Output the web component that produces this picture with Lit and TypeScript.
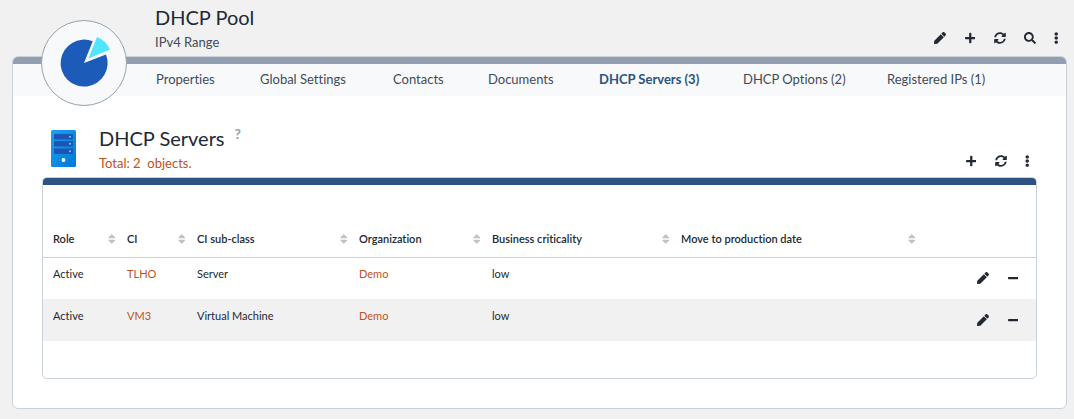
import { LitElement, html, css, svg } from "lit";
import { customElement, property } from "lit/decorators.js";

const ICONS: Record<string, [number, string]> = {
  pen: [512, "M290.74 93.24l128.02 128.02-277.99 277.99-114.14 12.6C11.35 513.54-1.56 500.62.14 485.34l12.7-114.22 277.9-277.88zm207.2-19.06l-60.11-60.11c-18.75-18.75-49.16-18.75-67.91 0l-56.55 56.55 128.02 128.02 56.55-56.55c18.75-18.76 18.75-49.16 0-67.91z"],
  plus: [448, "M416 208H272V64c0-17.67-14.33-32-32-32h-32c-17.67 0-32 14.33-32 32v144H32c-17.67 0-32 14.33-32 32v32c0 17.67 14.33 32 32 32h144v144c0 17.67 14.33 32 32 32h32c17.67 0 32-14.33 32-32V304h144c17.67 0 32-14.33 32-32v-32c0-17.67-14.33-32-32-32z"],
  minus: [448, "M416 208H32c-17.67 0-32 14.33-32 32v32c0 17.67 14.33 32 32 32h384c17.67 0 32-14.33 32-32v-32c0-17.67-14.33-32-32-32z"],
  sync: [512, "M370.72 133.28C339.458 104.008 298.888 87.962 255.848 88c-77.458.068-144.328 53.178-162.791 126.85-1.344 5.363-6.122 9.15-11.651 9.15H24.103c-7.498 0-13.194-6.807-11.807-14.176C33.933 94.924 134.813 8 256 8c66.448 0 126.791 26.136 171.315 68.685L463.03 40.97C478.149 25.851 504 36.559 504 57.941V192c0 13.255-10.745 24-24 24H345.941c-21.382 0-32.09-25.851-16.971-40.971l41.75-41.749zM32 296h134.059c21.382 0 32.09 25.851 16.971 40.971l-41.75 41.75c31.262 29.273 71.835 45.319 114.876 45.28 77.418-.07 144.315-53.144 162.787-126.849 1.344-5.363 6.122-9.15 11.651-9.15h57.304c7.498 0 13.194 6.807 11.807 14.176C478.067 417.076 377.187 504 256 504c-66.448 0-126.791-26.136-171.315-68.685L48.97 471.03C33.851 486.149 8 475.441 8 454.059V320c0-13.255 10.745-24 24-24z"],
  search: [512, "M505 442.7L405.3 343c-4.5-4.5-10.6-7-17-7H372c27.6-35.3 44-79.7 44-128C416 93.1 322.9 0 208 0S0 93.1 0 208s93.1 208 208 208c48.3 0 92.7-16.4 128-44v16.3c0 6.4 2.5 12.5 7 17l99.7 99.7c9.4 9.4 24.6 9.4 33.9 0l28.3-28.3c9.4-9.4 9.4-24.6.1-34zM208 336c-70.7 0-128-57.2-128-128 0-70.7 57.2-128 128-128 70.7 0 128 57.2 128 128 0 70.7-57.2 128-128 128z"],
  more: [192, "M96 184c39.8 0 72 32.2 72 72s-32.2 72-72 72-72-32.2-72-72 32.2-72 72-72zM24 80c0 39.8 32.2 72 72 72s72-32.2 72-72S135.8 8 96 8 24 40.2 24 80zm0 352c0 39.8 32.2 72 72 72s72-32.2 72-72-32.2-72-72-72-72 32.2-72 72z"],
  sort: [320, "M41 288h238c21.4 0 32.1 25.9 17 41L177 448c-9.4 9.4-24.6 9.4-33.9 0L24 329c-15.1-15.1-4.4-41 17-41zm255-105L177 64c-9.4-9.4-24.6-9.4-33.9 0L24 183c-15.1 15.1-4.4 41 17 41h238c21.4 0 32.1-25.9 17-41z"],
};

@customElement("icon-button")
class IconButton extends LitElement {
  @property() icon = "plus";
  @property() label = "";

  static styles = css`
    :host { display: block; }
    .button {
      display: flex;
      align-items: center;
      justify-content: center;
      min-width: 5px;
      height: 16px;
      padding: 0;
      border: 0;
      background: none;
      color: inherit;
      cursor: pointer;
    }
    .wide { width: 12px; }
    .glyph { display: block; height: 12px; fill: currentColor; flex: none; }
  `;

  render() {
    const [w, d] = ICONS[this.icon];
    const kind = this.icon === "sort" || this.icon === "more" ? "" : "wide";
    return html`<button class="button ${kind}" aria-label=${this.label}>
      <svg class="glyph" viewBox="0 0 ${w} 512" aria-hidden="true">${svg`<path d=${d}></path>`}</svg>
    </button>`;
  }
}

interface Row { role: string; ci: string; kind: string; org: string; criticality: string; date: string }

const TABS = [
  "Properties", "Global Settings", "Contacts", "Documents",
  "DHCP Servers (3)", "DHCP Options (2)", "Registered IPs (1)",
];

const COLUMNS: [string, string][] = [
  ["Role", "role"], ["CI", "ci"], ["CI sub-class", "kind"], ["Organization", "org"],
  ["Business criticality", "criticality"], ["Move to production date", "date"],
];

const ROWS: Row[] = [
  { role: "Active", ci: "TLHO", kind: "Server", org: "Demo", criticality: "low", date: "" },
  { role: "Active", ci: "VM3", kind: "Virtual Machine", org: "Demo", criticality: "low", date: "" },
];

@customElement("app-root")
class AppRoot extends LitElement {
  static styles = css`
    :host {
      display: block;
      box-sizing: border-box;
      min-height: 100vh;
      padding: 0 7px 10px 12px;
      background: #f1f1f1;
      color: #212934;
      font-family: Lato, "Open Sans", sans-serif;
      font-size: 13px;
      font-variant-ligatures: none;
    }
    .header {
      display: flex;
      justify-content: space-between;
      height: 56px;
      padding: 0 8px 0 143px;
    }
    .title { margin: 0; padding-top: 5px; font-size: 20px; line-height: 24px; font-weight: 400; }
    .subtitle { margin: 0; padding-top: 4px; line-height: 18px; color: #3f4b5b; }
    .actions { display: flex; gap: 18px; }
    .header .actions { padding-top: 30px; }
    .badge {
      position: absolute;
      left: 28px;
      top: -37px;
      width: 86px;
      height: 86px;
    }
    .panel {
      position: relative;
      border: 1px solid #c9d2db;
      border-radius: 6px;
      background: #fff;
    }
    .panel::before {
      content: "";
      display: block;
      height: 7px;
      border-radius: 5px 5px 0 0;
      background: #929fb1;
    }
    .tabs {
      display: grid;
      grid-template-columns: 104px 133px 95px 111px 144px 144px auto;
      height: 32px;
      padding-left: 143px;
      background: #f8f9fb;
    }
    .tab { padding-top: 6px; color: #3f4b5b; text-decoration: none; white-space: nowrap; line-height: 18px; }
    .current { color: #2c5382; font-weight: 700; }
    .content { padding: 29px; }
    .block-head { display: flex; align-items: flex-start; height: 52px; }
    .server { width: 25px; height: 37px; margin: 5px 23px 0 9px; }
    .block-title { display: flex; gap: 10px; margin: 0; font-size: 20px; line-height: 26px; font-weight: 400; }
    .help { color: #929fb1; font-size: 14px; line-height: 18px; font-weight: 700; cursor: help; }
    .total { margin: 0; line-height: 24px; color: #c0521b; white-space: pre; }
    .block-head .actions { margin-left: auto; padding: 28px 7px 0 0; }
    .card {
      border: 1px solid #c9d2db;
      border-radius: 5px;
      padding-bottom: 37px;
    }
    .card::before {
      content: "";
      display: block;
      height: 7px;
      margin-bottom: 36px;
      border-radius: 4px 4px 0 0;
      background: #2c5382;
    }
    .table { width: 100%; table-layout: fixed; border-collapse: collapse; font-size: 11px; line-height: 16px; }
    .table th, .table td { box-sizing: border-box; padding: 0 0 0 10px; text-align: left; white-space: nowrap; }
    .table th { height: 36px; border-bottom: 1px solid #c9d2db; font-weight: 600; }
    .table td { height: 42px; padding-bottom: 8px; }
    .table tbody tr:nth-child(even) { background: #f1f1f1; }
    .c-role { width: 74px; }
    .c-ci { width: 70px; }
    .c-kind { width: 162px; }
    .c-org { width: 133px; }
    .c-criticality { width: 189px; }
    .c-date { width: 246px; }
    .heading { display: flex; justify-content: space-between; align-items: center; padding-right: 2px; }
    .heading icon-button { color: #c2c2c2; }
    .link { color: #c0521b; text-decoration: none; }
    .row-actions { display: flex; justify-content: flex-end; gap: 18px; padding: 8px 17px 0 0; }
  `;

  private cell(row: Row, key: string) {
    const value = row[key as keyof Row];
    return key === "ci" || key === "org" ? html`<a class="link" href="#">${value}</a>` : value;
  }

  render() {
    return html`
      <header class="header">
        <div>
          <h1 class="title">DHCP Pool</h1>
          <p class="subtitle">IPv4 Range</p>
        </div>
        <div class="actions">
          <icon-button icon="pen" label="Modify"></icon-button>
          <icon-button icon="plus" label="New"></icon-button>
          <icon-button icon="sync" label="Refresh"></icon-button>
          <icon-button icon="search" label="Search"></icon-button>
          <icon-button icon="more" label="More actions"></icon-button>
        </div>
      </header>
      <main class="panel">
        <svg class="badge" viewBox="0 0 86 86" aria-hidden="true">
          <circle cx="43" cy="43" r="42.5" fill="#f8f9fb" stroke="#93a4ae"></circle>
          <path d="M43 43L51.7 21.2A23.5 23.5 0 1 0 65 34.5Z" fill="#1d5bb9"></path>
          <path d="M47.4 38.4L56 17A23.5 23.5 0 0 1 69 29.6Z" fill="#50e6ff"></path>
        </svg>
        <nav class="tabs">
          ${TABS.map((t, i) => html`<a class="tab ${i === 4 ? "current" : ""}" href="#">${t}</a>`)}
        </nav>
        <section class="content">
          <div class="block-head">
            <svg class="server" viewBox="0 0 25 37" aria-hidden="true">
              <defs>
                <linearGradient id="case" x1="0" y1="0" x2="1" y2="1">
                  <stop offset="0" stop-color="#1fa0f2"></stop>
                  <stop offset="1" stop-color="#0078d7"></stop>
                </linearGradient>
              </defs>
              <rect width="25" height="37" rx="1.5" fill="url(#case)"></rect>
              ${[4, 11, 18.5].map((y) => svg`
                <rect x="3" y=${y} width="19" height="5.5" rx="0.7" fill="#1c55b4"></rect>
                <circle cx="19" cy=${y + 2.8} r="1" fill="#50e6ff"></circle>`)}
              <circle cx="12.5" cy="30" r="1.9" fill="#fff"></circle>
            </svg>
            <div>
              <h2 class="block-title">DHCP Servers <span class="help">?</span></h2>
              <p class="total">Total: 2  objects.</p>
            </div>
            <div class="actions">
              <icon-button icon="plus" label="Add"></icon-button>
              <icon-button icon="sync" label="Refresh list"></icon-button>
              <icon-button icon="more" label="More list actions"></icon-button>
            </div>
          </div>
          <div class="card">
            <table class="table">
              <thead>
                <tr>
                  ${COLUMNS.map(([name, key]) => html`<th class="c-${key}" scope="col">
                    <div class="heading">${name}<icon-button icon="sort" label="Sort by ${name}"></icon-button></div>
                  </th>`)}
                  <th></th>
                </tr>
              </thead>
              <tbody>
                ${ROWS.map((row) => html`<tr>
                  ${COLUMNS.map(([, key]) => html`<td>${this.cell(row, key)}</td>`)}
                  <td>
                    <div class="row-actions">
                      <icon-button icon="pen" label="Edit ${row.ci}"></icon-button>
                      <icon-button icon="minus" label="Remove ${row.ci}"></icon-button>
                    </div>
                  </td>
                </tr>`)}
              </tbody>
            </table>
          </div>
        </section>
      </main>
    `;
  }
}
